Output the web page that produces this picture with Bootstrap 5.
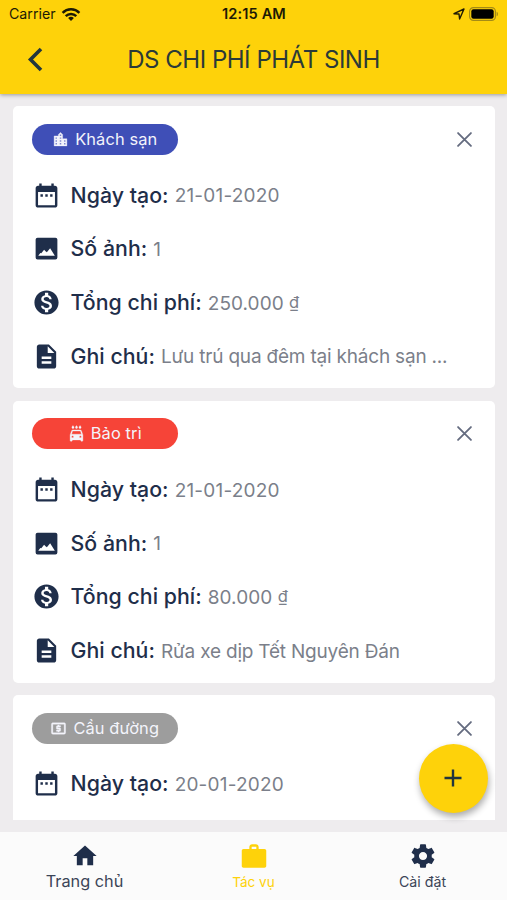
<!DOCTYPE html>
<html lang="vi">
<head>
<meta charset="utf-8">
<meta name="viewport" content="width=device-width, initial-scale=1">
<title>DS chi phí phát sinh</title>
<link href="https://cdn.jsdelivr.net/npm/bootstrap@5.3.0/dist/css/bootstrap.min.css" rel="stylesheet">
<style>
  body { font-family: Inter, "Liberation Sans", sans-serif; background: #eeecee; color: #1f2e4a; }
  .app { height: 900px; }
  .app-header { background: #fed20a; height: 94px; box-shadow: 0 1px 4px rgba(0,0,0,.35); z-index: 2; }
  .status { height: 28px; padding: 0 8px 0 9px; color: #1d1a05; font-size: 14.2px; line-height: 28px; }
  .status .clock { font-weight: 600; font-size: 14.6px; letter-spacing: .1px; }
  .title-row { height: 63px; }
  .title-row h1 { font-size: 24px; font-weight: 400; color: #2b3a38; letter-spacing: -.47px; line-height: 64px; }
  .back-slot { width: 70px; padding-left: 27px; }
  .feed { height: 725.5px; padding: 12.3px 12.5px 0 13px; gap: 12.4px; }
  .expense { border: 0; border-radius: 5px; height: 282px; padding: 17.5px 18.5px 0; flex: none; }
  .pill { width: 146.5px; height: 31px; font-size: 16.4px; color: #f3f4fb; letter-spacing: .12px; gap: 6px; }
  .pill svg { width: 17px; height: 17px; stroke: currentColor; stroke-width: .5; }
  .pill-hotel { background: #3f4fb7; }
  .pill-care { background: #f64438; }
  .pill-toll { background: #9d9d9d; }
  .line { height: 53.7px; }
  .lines { padding-top: 13.5px; }
  .line svg { width: 29px; height: 29px; flex: none; margin: 0 10px 0 0; }
  .key { font-size: 21.3px; font-weight: 500; letter-spacing: .04px; margin-right: 6px; padding-top: 1px; }
  .val { font-size: 19px; color: #7b7f8a; font-weight: 400; letter-spacing: .05px; padding-top: 2.500px; white-space: nowrap; }
  .val-date { letter-spacing: .2px; }
  .val-note { letter-spacing: -.2px; }
  .dong { font-size: 16.5px; line-height: 1; vertical-align: 2.500px; }
  .tabs { height: 68px; background: #fbfbfb; font-size: 16.3px; line-height: 20px; color: #3b4557; padding-top: 9.500px; }
  .tabs svg { width: 28px; height: 28px; margin-bottom: 2px; }
  .tab-home { line-height: 18px; }
  .tab-small { font-size: 13.600px; letter-spacing: -.05px; }
  .tab-set { font-size: 14.2px; letter-spacing: 0; }
  .tab-on { color: #fed20a; }
  .ink { color: #1f2e4a; }
  .fab { right: 19.500px; bottom: 87.500px; width: 69px; height: 69px; background: #fed20a; box-shadow: 1px 4px 7px rgba(0,0,0,.33); z-index: 3; }
</style>
</head>
<body>
<svg class="d-none" xmlns="http://www.w3.org/2000/svg">
  <symbol id="i-date" viewBox="0 0 24 24"><path d="M9 11H7v2h2v-2zm4 0h-2v2h2v-2zm4 0h-2v2h2v-2zm2-7h-1V2h-2v2H8V2H6v2H5c-1.11 0-1.99.9-1.99 2L3 20c0 1.1.89 2 2 2h14c1.1 0 2-.9 2-2V6c0-1.1-.9-2-2-2zm0 16H5V9h14v11z"/></symbol>
  <symbol id="i-photo" viewBox="0 0 24 24"><path fill-rule="evenodd" d="M4.600 3h14.800A1.600 1.600 0 0 1 21 4.600v14.800A1.600 1.600 0 0 1 19.400 21H4.600A1.600 1.600 0 0 1 3 19.400V4.600A1.600 1.600 0 0 1 4.600 3zM5.200 18h13.700l-3.900-6.200-2.700 3.400-1.100-1-1.200-1.200-2.300 3-.8-.3z"/></symbol>
  <symbol id="i-money" viewBox="0 0 24 24"><path d="M12 2C6.480 2 2 6.480 2 12s4.480 10 10 10 10-4.480 10-10S17.520 2 12 2zm1.410 16.090V20h-2.670v-1.930c-1.710-.36-3.160-1.460-3.270-3.400h1.960c.1 1.050.82 1.870 2.650 1.870 1.960 0 2.400-.98 2.400-1.590 0-.83-.44-1.610-2.670-2.140-2.480-.6-4.180-1.620-4.180-3.670 0-1.720 1.390-2.840 3.110-3.210V4h2.670v1.950c1.860.45 2.790 1.860 2.850 3.390H14.300c-.05-1.110-.64-1.870-2.220-1.870-1.500 0-2.400.68-2.400 1.640 0 .84.65 1.390 2.670 1.910s4.180 1.390 4.180 3.910c-.01 1.830-1.380 2.830-3.120 3.160z"/></symbol>
  <symbol id="i-note" viewBox="0 0 24 24"><path d="M14 2H6c-1.100 0-1.990.9-1.990 2L4 20c0 1.100.89 2 1.990 2H18c1.100 0 2-.9 2-2V8l-6-6zm2 16H8v-2h8v2zm0-4H8v-2h8v2zm-3-5V3.500L18.500 9H13z"/></symbol>
  <symbol id="i-city" viewBox="0 0 24 24"><path d="M15 11V5l-3-3-3 3v2H3v14h18V11h-6zm-8 8H5v-2h2v2zm0-4H5v-2h2v2zm0-4H5V9h2v2zm6 8h-2v-2h2v2zm0-4h-2v-2h2v2zm0-4h-2V9h2v2zm0-4h-2V5h2v2zm6 12h-2v-2h2v2zm0-4h-2v-2h2v2z"/></symbol>
  <symbol id="i-wash" viewBox="0 0 24 24"><path d="M17 5c.83 0 1.500-.67 1.500-1.500 0-1-1.500-2.700-1.500-2.700s-1.500 1.700-1.500 2.700c0 .83.67 1.500 1.500 1.500zm-5 0c.83 0 1.500-.67 1.500-1.500 0-1-1.500-2.700-1.500-2.700s-1.500 1.700-1.500 2.700c0 .83.67 1.500 1.500 1.500zM7 5c.83 0 1.500-.67 1.500-1.500C8.500 2.500 7 .8 7 .8S5.500 2.500 5.500 3.500C5.500 4.330 6.170 5 7 5zm11.920 3.010C18.720 7.420 18.160 7 17.500 7h-11c-.66 0-1.210.42-1.420 1.010L3 14v8c0 .55.45 1 1 1h1c.55 0 1-.45 1-1v-1h12v1c0 .55.45 1 1 1h1c.55 0 1-.45 1-1v-8l-2.080-5.990zM6.500 18c-.83 0-1.500-.67-1.500-1.500S5.670 15 6.500 15s1.500.67 1.500 1.500S7.330 18 6.500 18zm11 0c-.83 0-1.500-.67-1.500-1.500s.67-1.500 1.500-1.500 1.500.67 1.500 1.500-.67 1.500-1.500 1.500zM5 13l1.500-4.500h11L19 13H5z"/></symbol>
  <symbol id="i-atm" viewBox="0 0 24 24"><path d="M11 17h2v-1h1c.55 0 1-.45 1-1v-3c0-.55-.45-1-1-1h-3v-1h4V8h-2V7h-2v1h-1c-.55 0-1 .45-1 1v3c0 .55.45 1 1 1h3v1H9v2h2v1zm9-13H4c-1.110 0-1.990.89-1.990 2L2 18c0 1.110.89 2 2 2h16c1.110 0 2-.89 2-2V6c0-1.110-.89-2-2-2zm0 14H4V6h16v12z"/></symbol>
  <symbol id="i-x" viewBox="0 0 14 14"><path d="M1 1l12 12M13 1L1 13" fill="none" stroke="#656c80" stroke-width="1.700" stroke-linecap="round"/></symbol>
</svg>

<div class="app d-flex flex-column position-relative overflow-hidden">
  <header class="app-header position-relative flex-shrink-0">
    <div class="status d-flex align-items-center">
      <div class="col d-flex align-items-center"><span class="me-1">Carrier</span>
        <svg width="22" height="15" viewBox="-1 0 22 14"><g fill="none" stroke="#1d1a05" stroke-width="2.500"><path d="M1.600 5.300a12 12 0 0 1 16.800 0"/><path d="M4.700 8.600a7.600 7.600 0 0 1 10.600 0"/></g><path d="M10 13.500l-2.900-2.900a4.200 4.200 0 0 1 5.800 0z" fill="#1d1a05"/></svg>
      </div>
      <div class="clock text-center">12:15 AM</div>
      <div class="col d-flex align-items-center justify-content-end">
        <svg class="me-1" width="12" height="12" viewBox="0 0 12 12"><path d="M1 5.700L11 1 6.600 11 6 6z" fill="none" stroke="#1d1a05" stroke-width="1.400" stroke-linejoin="round"/></svg>
        <svg width="30" height="14" viewBox="0 0 30 14"><rect x=".6" y=".6" width="25.800" height="12.800" rx="3.800" fill="none" stroke="#a58b16" stroke-width="1.200"/><rect x="2.300" y="2.300" width="22.400" height="9.400" rx="2.200" fill="#000"/><path d="M27.600 4.700c1.800.7 1.800 3.900 0 4.600z" fill="#a58b16"/></svg>
      </div>
    </div>
    <div class="title-row d-flex">
      <div class="back-slot d-flex align-items-center"><svg width="16" height="25" viewBox="0 0 16 25"><path d="M14 2L3.500 12.500 14 23" fill="none" stroke="#22363d" stroke-width="3.600"/></svg></div>
      <h1 class="flex-grow-1 text-center mb-0">DS CHI PHÍ PHÁT SINH</h1>
      <div class="back-slot"></div>
    </div>
  </header>

  <main class="feed d-flex flex-column overflow-hidden flex-shrink-0">
    <article class="card expense">
      <div class="d-flex justify-content-between align-items-center">
        <span class="pill pill-hotel rounded-pill d-flex align-items-center justify-content-center"><svg fill="currentColor"><use href="#i-city"/></svg>Khách sạn</span>
        <svg class="me-1" width="15" height="15"><use href="#i-x"/></svg>
      </div>
      <div class="lines">
        <div class="line d-flex align-items-center"><svg fill="currentColor"><use href="#i-date"/></svg><span class="key">Ngày tạo:</span><span class="val val-date">21-01-2020</span></div>
        <div class="line d-flex align-items-center"><svg fill="currentColor"><use href="#i-photo"/></svg><span class="key">Số ảnh:</span><span class="val">1</span></div>
        <div class="line d-flex align-items-center"><svg fill="currentColor"><use href="#i-money"/></svg><span class="key">Tổng chi phí:</span><span class="val">250.000 <span class="dong">₫</span></span></div>
        <div class="line d-flex align-items-center"><svg fill="currentColor"><use href="#i-note"/></svg><span class="key">Ghi chú:</span><span class="val val-note">Lưu trú qua đêm tại khách sạn ...</span></div>
      </div>
    </article>
    <article class="card expense">
      <div class="d-flex justify-content-between align-items-center">
        <span class="pill pill-care rounded-pill d-flex align-items-center justify-content-center"><svg fill="currentColor"><use href="#i-wash"/></svg>Bảo trì</span>
        <svg class="me-1" width="15" height="15"><use href="#i-x"/></svg>
      </div>
      <div class="lines">
        <div class="line d-flex align-items-center"><svg fill="currentColor"><use href="#i-date"/></svg><span class="key">Ngày tạo:</span><span class="val val-date">21-01-2020</span></div>
        <div class="line d-flex align-items-center"><svg fill="currentColor"><use href="#i-photo"/></svg><span class="key">Số ảnh:</span><span class="val">1</span></div>
        <div class="line d-flex align-items-center"><svg fill="currentColor"><use href="#i-money"/></svg><span class="key">Tổng chi phí:</span><span class="val">80.000 <span class="dong">₫</span></span></div>
        <div class="line d-flex align-items-center"><svg fill="currentColor"><use href="#i-note"/></svg><span class="key">Ghi chú:</span><span class="val val-note">Rửa xe dịp Tết Nguyên Đán</span></div>
      </div>
    </article>
    <article class="card expense">
      <div class="d-flex justify-content-between align-items-center">
        <span class="pill pill-toll rounded-pill d-flex align-items-center justify-content-center"><svg fill="currentColor"><use href="#i-atm"/></svg>Cầu đường</span>
        <svg class="me-1" width="15" height="15"><use href="#i-x"/></svg>
      </div>
      <div class="lines">
        <div class="line d-flex align-items-center"><svg fill="currentColor"><use href="#i-date"/></svg><span class="key">Ngày tạo:</span><span class="val val-date">20-01-2020</span></div>
      </div>
    </article>
  </main>

  <button class="fab btn rounded-circle position-absolute border-0 d-flex align-items-center justify-content-center p-0" aria-label="Thêm"><svg width="18" height="18" viewBox="0 0 18 18"><path d="M9 .5v17M.5 9h17" stroke="#22363d" stroke-width="2.400"/></svg></button>

  <nav class="tabs row g-0 mt-auto flex-shrink-0 text-center">
    <div class="col d-flex flex-column align-items-center"><svg class="ink" viewBox="0 0 24 24" fill="currentColor"><path d="M10 20v-6h4v6h5v-8h3L12 3 2 12h3v8z"/></svg><span class="tab-home">Trang chủ</span></div>
    <div class="col d-flex flex-column align-items-center tab-on"><svg viewBox="0 0 24 24" fill="currentColor"><path fill-rule="evenodd" d="M8 6V4.500C8 3.100 9 2 10.400 2h3.200C15 2 16 3.100 16 4.500V6h5c.8 0 1.500.7 1.500 1.500v13c0 .8-.7 1.500-1.500 1.500h-18c-.8 0-1.500-.7-1.500-1.500v-13C1.500 6.700 2.200 6 3 6zm2 0h4V4h-4z"/></svg><span class="tab-small">Tác vụ</span></div>
    <div class="col d-flex flex-column align-items-center"><svg class="ink" viewBox="0 0 24 24" fill="currentColor"><path d="M19.430 12.980c.04-.32.07-.64.07-.98s-.03-.66-.07-.98l2.110-1.650c.19-.15.24-.42.12-.64l-2-3.460c-.12-.22-.39-.3-.61-.22l-2.490 1c-.52-.4-1.080-.73-1.690-.98l-.38-2.650C14.460 2.180 14.250 2 14 2h-4c-.25 0-.46.18-.49.42l-.38 2.650c-.61.25-1.170.59-1.690.98l-2.490-1c-.23-.09-.49 0-.61.22l-2 3.460c-.13.22-.07.49.12.64l2.110 1.650c-.04.32-.07.65-.07.98s.03.66.07.98l-2.110 1.650c-.19.15-.24.42-.12.64l2 3.460c.12.22.39.3.61.22l2.490-1c.52.4 1.080.73 1.690.98l.38 2.650c.03.24.24.42.49.42h4c.25 0 .46-.18.49-.42l.38-2.650c.61-.25 1.170-.59 1.690-.98l2.490 1c.23.09.49 0 .61-.22l2-3.460c.12-.22.07-.49-.12-.64l-2.110-1.650zM12 15.500c-1.930 0-3.500-1.570-3.500-3.500s1.570-3.500 3.500-3.500 3.500 1.570 3.500 3.500-1.570 3.500-3.500 3.500z"/></svg><span class="tab-set">Cài đặt</span></div>
  </nav>
</div>
<script src="https://cdn.jsdelivr.net/npm/bootstrap@5.3.0/dist/js/bootstrap.bundle.min.js"></script>
</body>
</html>
